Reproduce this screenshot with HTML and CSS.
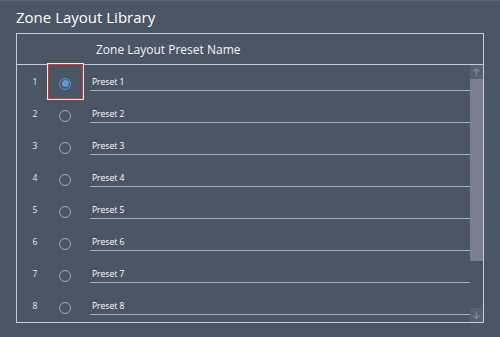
FILE: index.html
```html
<!DOCTYPE html>
<html>
<head>
<meta charset="utf-8">
<link rel="stylesheet" href="styles.css">
</head>
<body>
<div class="page">
  <div class="title">Zone Layout Library</div>
  <div class="table">
    <div class="head">Zone Layout Preset Name</div>
    <div class="body">
      <div class="rows">
        <div class="row">
          <div class="num">1</div>
          <div class="radio-cell"><span class="focus"></span><span class="radio checked"></span></div>
          <div class="name">Preset 1</div>
        </div>
        <div class="row"><div class="num">2</div><div class="radio-cell"><span class="radio"></span></div><div class="name">Preset 2</div></div>
        <div class="row"><div class="num">3</div><div class="radio-cell"><span class="radio"></span></div><div class="name">Preset 3</div></div>
        <div class="row"><div class="num">4</div><div class="radio-cell"><span class="radio"></span></div><div class="name">Preset 4</div></div>
        <div class="row"><div class="num">5</div><div class="radio-cell"><span class="radio"></span></div><div class="name">Preset 5</div></div>
        <div class="row"><div class="num">6</div><div class="radio-cell"><span class="radio"></span></div><div class="name">Preset 6</div></div>
        <div class="row"><div class="num">7</div><div class="radio-cell"><span class="radio"></span></div><div class="name">Preset 7</div></div>
        <div class="row"><div class="num">8</div><div class="radio-cell"><span class="radio"></span></div><div class="name">Preset 8</div></div>
      </div>
      <div class="scrollbar">
        <div class="sb-btn"><svg width="13" height="14" viewBox="0 0 13 14"><path d="M6.5 3.5 L3.5 6.5 M6.5 3.5 L9.5 6.5 M6.5 3.5 V10.5" stroke="#7f8792" stroke-width="1.3" fill="none"/></svg></div>
        <div class="sb-thumb"></div>
        <div class="sb-track"></div>
        <div class="sb-btn"><svg width="13" height="14" viewBox="0 0 13 14"><path d="M6.5 10.5 L3.5 7.5 M6.5 10.5 L9.5 7.5 M6.5 10.5 V3.5" stroke="#7f8792" stroke-width="1.3" fill="none"/></svg></div>
      </div>
    </div>
  </div>
</div>
</body>
</html>
```
FILE: styles.css
```css
html, body {
  margin: 0;
  padding: 0;
  background: #4b5664;
}
.page {
  width: 500px;
  height: 337px;
  font-family: "Open Sans", "Noto Sans", sans-serif;
  color: #ffffff;
  box-sizing: border-box;
  padding-top: 5px;
  border-top: 1px solid #5a6470;
}
.title {
  font-size: 15px;
  line-height: 22px;
  padding-left: 16px;
  height: 27px;
}
.table {
  margin-left: 16px;
  width: 468px;
  height: 290px;
  box-sizing: border-box;
  border: 1px solid #c7cbd0;
}
.head {
  height: 31px;
  box-sizing: border-box;
  border-bottom: 1px solid #c7cbd0;
  font-size: 12px;
  line-height: 32px;
  padding-left: 79px;
  color: #f2f4f6;
}
.body {
  display: flex;
  height: 257px;
}
.rows {
  flex: 1;
}
.row {
  display: grid;
  grid-template-columns: 36px 24px 1fr;
  height: 32px;
}
.num {
  font-size: 8.5px;
  line-height: 34px;
  text-align: center;
  color: #e6e8eb;
  padding-left: 0;
}
.radio-cell {
  display: flex;
  align-items: center;
  justify-content: center;
  position: relative;
  padding-top: 3px;
}
.radio {
  width: 10px;
  height: 10px;
  border: 1.5px solid #a3a9b1;
  border-radius: 50%;
  display: block;
  box-sizing: content-box;
}
.radio.checked {
  border-color: #5b93cc;
  position: relative;
}
.radio.checked::after {
  content: "";
  position: absolute;
  left: 1.5px;
  top: 1.5px;
  width: 7px;
  height: 7px;
  border-radius: 50%;
  background: #5b9bd8;
}
.focus {
  position: absolute;
  left: -5px;
  top: -1px;
  width: 35px;
  height: 35px;
  box-sizing: border-box;
  border: 1px solid #e5312f;
  box-shadow: 0 0 0 1px #e8eaec;
}
.name {
  margin-left: 13px;
  margin-top: 8px;
  height: 17px;
  border-bottom: 1px solid #a9afb7;
  font-size: 8.5px;
  line-height: 18px;
  padding-left: 2px;
  color: #ffffff;
}
.scrollbar {
  width: 13px;
  display: flex;
  flex-direction: column;
}
.sb-btn {
  height: 14px;
  background: #58616e;
}
.sb-btn svg {
  display: block;
}
.sb-thumb {
  height: 182px;
  background: #7a818c;
}
.sb-track {
  flex: 1;
}
```
